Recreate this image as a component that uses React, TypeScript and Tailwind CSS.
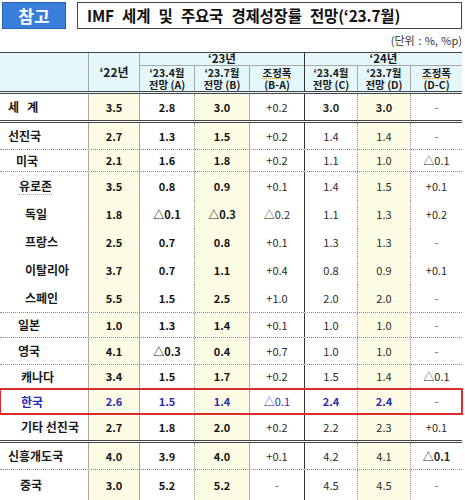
import React from 'react';

const W = ['w-[88px]', 'w-[51px]', 'w-[55px]', 'w-[55px]', 'w-[55px]', 'w-[53px]', 'w-[53px]', 'w-[52px]'];
const VL = [
  '',
  'border-l border-solid border-[#a8a8a8]',
  'border-l border-solid border-[#a8a8a8]',
  'border-l border-dotted border-[#9a9a9a]',
  'border-l border-solid border-[#a8a8a8]',
  'border-l border-solid border-[#333333]',
  'border-l border-dotted border-[#9a9a9a]',
  'border-l border-dotted border-[#9a9a9a]',
];
const YEL = [false, true, false, true, false, false, true, false];

type Row = {
  l: string;
  pl: string;
  h: string;
  b: string;
  v: string[];
  boldC?: boolean;
  blue?: boolean;
  red?: boolean;
  boldLast?: boolean;
  sq?: boolean;
};

const DOT = 'border-b border-dotted border-[#8a8a8a]';
const DBL = 'border-b-[3px] border-double border-[#444444]';

const rows: Row[] = [
  { l: '세   계', pl: 'pl-[8px]', h: 'h-[29px]', b: DBL, v: ['3.5', '2.8', '3.0', '+0.2', '3.0', '3.0', '-'], boldC: true },
  { l: '선진국', pl: 'pl-[8px]', h: 'h-[27px]', b: DOT, v: ['2.7', '1.3', '1.5', '+0.2', '1.4', '1.4', '-'] },
  { l: '미국', pl: 'pl-[16px]', h: 'h-[22px]', b: DOT, v: ['2.1', '1.6', '1.8', '+0.2', '1.1', '1.0', '△0.1'] },
  { l: '유로존', pl: 'pl-[19px]', h: 'h-[28px]', b: '', v: ['3.5', '0.8', '0.9', '+0.1', '1.4', '1.5', '+0.1'], sq: true },
  { l: '독일', pl: 'pl-[25px]', h: 'h-[28px]', b: '', v: ['1.8', '△0.1', '△0.3', '△0.2', '1.1', '1.3', '+0.2'] },
  { l: '프랑스', pl: 'pl-[25px]', h: 'h-[28px]', b: '', v: ['2.5', '0.7', '0.8', '+0.1', '1.3', '1.3', '-'] },
  { l: '이탈리아', pl: 'pl-[25px]', h: 'h-[28px]', b: '', v: ['3.7', '0.7', '1.1', '+0.4', '0.8', '0.9', '+0.1'] },
  { l: '스페인', pl: 'pl-[25px]', h: 'h-[29px]', b: DOT, v: ['5.5', '1.5', '2.5', '+1.0', '2.0', '2.0', '-'] },
  { l: '일본', pl: 'pl-[18px]', h: 'h-[25px]', b: DOT, v: ['1.0', '1.3', '1.4', '+0.1', '1.0', '1.0', '-'] },
  { l: '영국', pl: 'pl-[18px]', h: 'h-[27px]', b: DOT, v: ['4.1', '△0.3', '0.4', '+0.7', '1.0', '1.0', '-'] },
  { l: '캐나다', pl: 'pl-[21px]', h: 'h-[24px]', b: DOT, v: ['3.4', '1.5', '1.7', '+0.2', '1.5', '1.4', '△0.1'] },
  { l: '한국', pl: 'pl-[21px]', h: 'h-[25px]', b: '', v: ['2.6', '1.5', '1.4', '△0.1', '2.4', '2.4', '-'], blue: true, red: true },
  { l: '기타 선진국', pl: 'pl-[21px]', h: 'h-[29px]', b: DBL, v: ['2.7', '1.8', '2.0', '+0.2', '2.2', '2.3', '+0.1'] },
  { l: '신흥개도국', pl: 'pl-[8px]', h: 'h-[27px]', b: DOT, v: ['4.0', '3.9', '4.0', '+0.1', '4.2', '4.1', '△0.1'], boldLast: true },
  { l: '중국', pl: 'pl-[20px]', h: 'h-[30px]', b: '', v: ['3.0', '5.2', '5.2', '-', '4.5', '4.5', '-'] },
];

function DataRow({ r }: { r: Row }) {
  return (
    <div
      className={`flex w-[462px] ${r.h} ${r.b} ${
        r.red ? 'outline-2 outline-solid outline-[#dd2a2a] -outline-offset-1' : ''
      }`}
    >
      <div
        className={`${W[0]} shrink-0 flex items-center ${r.pl} text-[12px] font-bold whitespace-pre ${
          r.blue ? 'text-[#2b2bb5]' : 'text-[#1a1a1a]'
        }`}
      >
        <span className={r.sq ? 'underline decoration-dotted decoration-[#e39a3a] underline-offset-[3px]' : ''}>{r.l}</span>
      </div>
      {r.v.map((val, i) => {
        const idx = i + 1;
        let weight = 'font-normal';
        if (idx <= 3) weight = 'font-bold';
        if ((idx === 5 || idx === 6) && (r.boldC || r.blue)) weight = 'font-bold';
        if (idx === 7 && r.boldLast) weight = 'font-bold';
        let color = idx <= 3 ? 'text-[#141414]' : 'text-[#2a2a2a]';
        if (r.blue && val !== '-') color = 'text-[#2b2bb5]';
        if (val === '-') color = 'text-[#555555]';
        return (
          <div
            key={i}
            className={`${W[idx]} shrink-0 flex items-center justify-center text-[11px] ${weight} ${color} ${VL[idx]} ${
              YEL[idx] ? 'bg-[#fdfde5]' : ''
            }`}
          >
            {val}
          </div>
        );
      })}
    </div>
  );
}

function Sub({ a, b, cls, sq }: { a: string; b: string; cls: string; sq?: boolean }) {
  return (
    <div className={`${cls} flex flex-col items-center justify-center gap-[1px] text-[10.5px] font-bold text-[#1a1a1a]`}>
      <span className={`block h-[11px] leading-[11px] ${sq ? 'underline decoration-dotted decoration-[#e39a3a] underline-offset-[1px]' : ''}`}>{a}</span>
      <span className="block h-[11px] leading-[11px]">{b}</span>
    </div>
  );
}

export default function App() {
  return (
    <div className="w-[465px] h-[500px] overflow-hidden bg-white font-['Noto_Sans_CJK_KR','Noto_Sans',sans-serif] text-[#1a1a1a]">
      <div className="flex items-start gap-[11px] pl-[2px] pr-[3px] pt-[2px]">
        <div className="w-[64px] h-[27px] shrink-0 bg-[#3a7edb] border border-[#2b63b3] flex items-center justify-center text-white font-bold text-[17px] leading-none">
          참고
        </div>
        <div className="flex-1 h-[27px] border-[1.5px] border-[#444444] flex items-center pl-[9px] font-bold text-[15.5px] leading-none text-[#111111] [word-spacing:5px] tracking-[-0.2px]">
          IMF 세계 및 주요국 경제성장률 전망(‘23.7월)
        </div>
      </div>
      <div className="h-[23px] flex items-center justify-end pr-[3px] text-[11px] text-[#333333] leading-none [word-spacing:1px]">
        (단위 : %, %p)
      </div>
      <div className="flex w-[462px] h-[42px] border-t border-b-[3px] border-double border-[#444444] bg-[#e4f8fc]">
        <div className="w-[88px] shrink-0" />
        <div className="w-[51px] shrink-0 border-l border-[#a8a8a8] flex items-center justify-center text-[12px] font-bold leading-none">
          ‘22년
        </div>
        <div className="w-[165px] shrink-0 border-l border-[#a8a8a8] flex flex-col">
          <div className="h-[13px] border-b border-[#a8a8a8] flex items-center justify-center text-[11.5px] font-bold leading-none">
            ‘23년
          </div>
          <div className="flex flex-1">
            <Sub a="‘23.4월" b="전망 (A)" cls="w-[54px]" />
            <Sub a="‘23.7월" b="전망 (B)" cls="w-[55px] border-l border-[#a8a8a8]" />
            <Sub a="조정폭" b="(B-A)" cls="w-[55px] border-l border-[#a8a8a8]" sq />
          </div>
        </div>
        <div className="w-[158px] shrink-0 border-l border-[#333333] flex flex-col">
          <div className="h-[13px] border-b border-[#a8a8a8] flex items-center justify-center text-[11.5px] font-bold leading-none">
            ‘24년
          </div>
          <div className="flex flex-1">
            <Sub a="‘23.4월" b="전망 (C)" cls="w-[52px]" />
            <Sub a="‘23.7월" b="전망 (D)" cls="w-[53px] border-l border-[#a8a8a8]" />
            <Sub a="조정폭" b="(D-C)" cls="w-[52px] border-l border-[#a8a8a8]" sq />
          </div>
        </div>
      </div>
      {rows.map((r, i) => (
        <DataRow key={i} r={r} />
      ))}
    </div>
  );
}
